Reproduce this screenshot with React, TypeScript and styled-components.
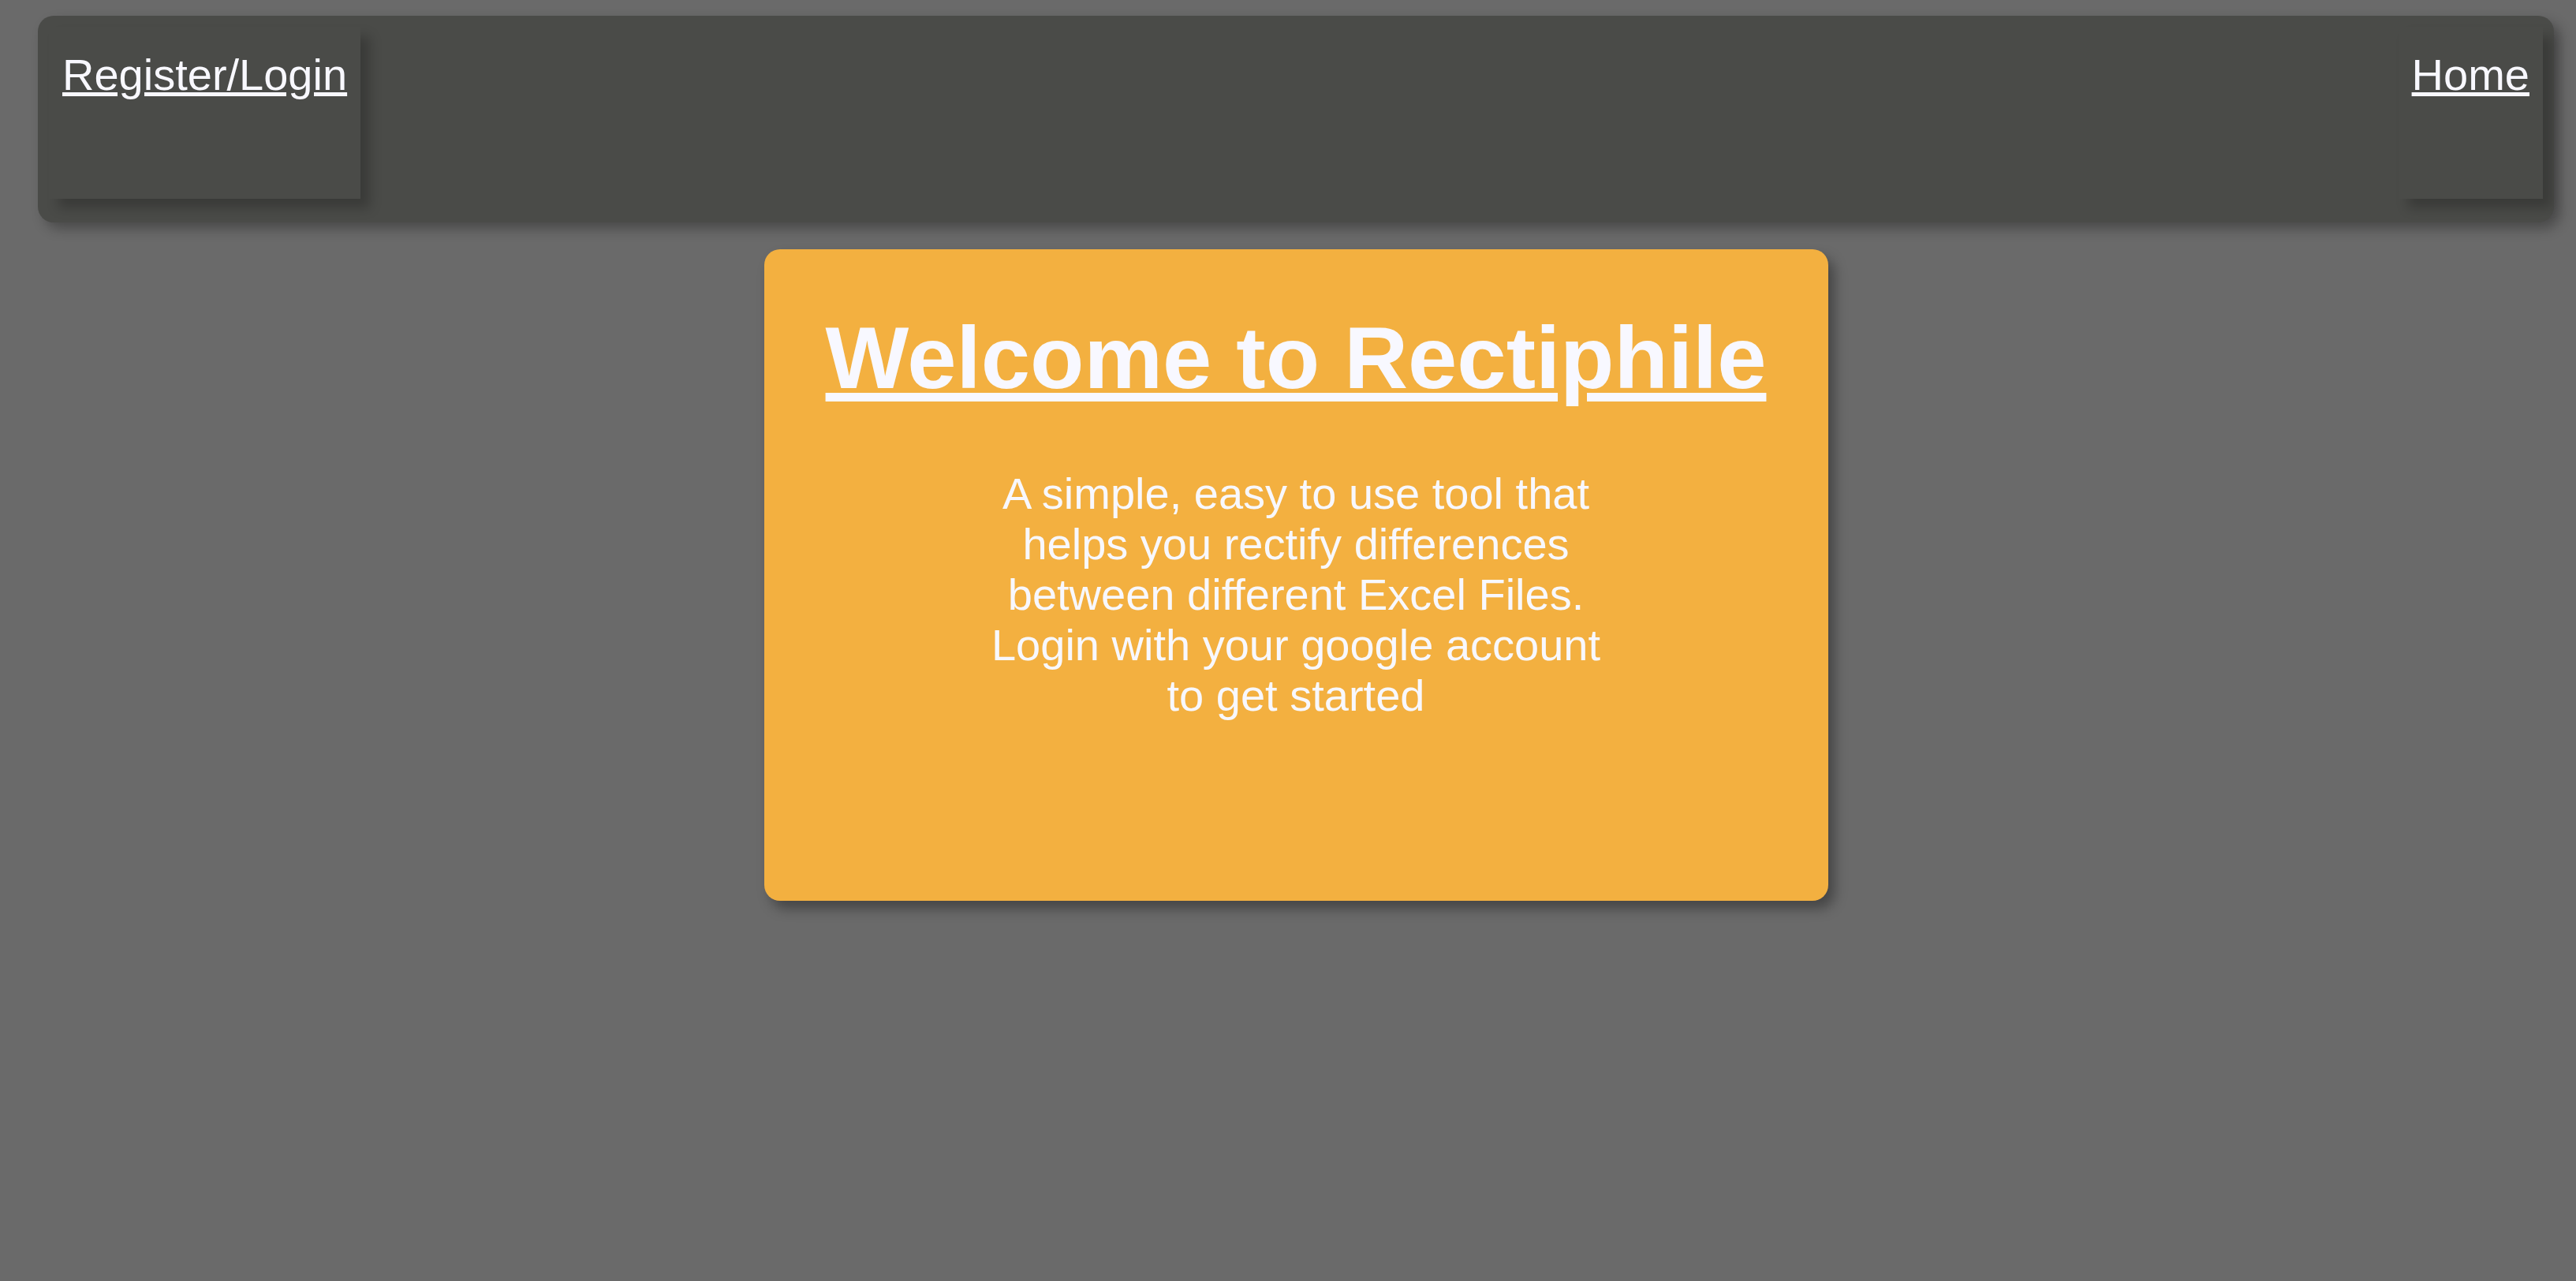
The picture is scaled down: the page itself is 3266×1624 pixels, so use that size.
import styled, { createGlobalStyle } from "styled-components";

const GlobalStyle = createGlobalStyle`
  html, body {
    margin: 0;
    padding: 0;
    background: #6a6a6a;
    font-family: "Liberation Sans", Helvetica, Arial, sans-serif;
  }
`;

const Page = styled.div`
  min-height: 100vh;
  box-sizing: border-box;
  padding: 20px 28px 0 48px;
  background: #6a6a6a;
`;

const NavBar = styled.nav`
  display: flex;
  justify-content: space-between;
  align-items: flex-start;
  height: 262px;
  padding: 14px;
  box-sizing: border-box;
  border-radius: 20px;
  background: #4a4b48;
  box-shadow: 8px 8px 16px rgba(0, 0, 0, 0.3);
`;

const NavItem = styled.div`
  height: 218px;
  box-sizing: border-box;
  padding: 28px 17px 0;
  background: #4a4b48;
  box-shadow: 12px 12px 14px rgba(0, 0, 0, 0.22);
`;

const NavLink = styled.a`
  font-size: 56px;
  color: #f8f8ff;
  text-decoration: underline;
  cursor: pointer;
`;

const Main = styled.main`
  display: flex;
  justify-content: center;
  margin-top: 34px;
`;

const Card = styled.section`
  width: 1349px;
  height: 826px;
  box-sizing: border-box;
  padding-top: 73px;
  border-radius: 20px;
  background: #f3b040;
  box-shadow: 8px 10px 16px rgba(0, 0, 0, 0.35);
  text-align: center;
  color: #f8f8ff;
`;

const Title = styled.h1`
  margin: 0;
  font-size: 112px;
  font-weight: bold;
  text-decoration: underline;
`;

const Blurb = styled.p`
  width: 800px;
  margin: 76px auto 0;
  font-size: 56px;
  line-height: 64px;
`;

export default function App() {
  return (
    <>
      <GlobalStyle />
      <Page>
        <NavBar>
          <NavItem>
            <NavLink>Register/Login</NavLink>
          </NavItem>
          <NavItem>
            <NavLink>Home</NavLink>
          </NavItem>
        </NavBar>
        <Main>
          <Card>
            <Title>Welcome to Rectiphile</Title>
            <Blurb>
              A simple, easy to use tool that helps you rectify differences
              between different Excel Files. Login with your google account to
              get started
            </Blurb>
          </Card>
        </Main>
      </Page>
    </>
  );
}
